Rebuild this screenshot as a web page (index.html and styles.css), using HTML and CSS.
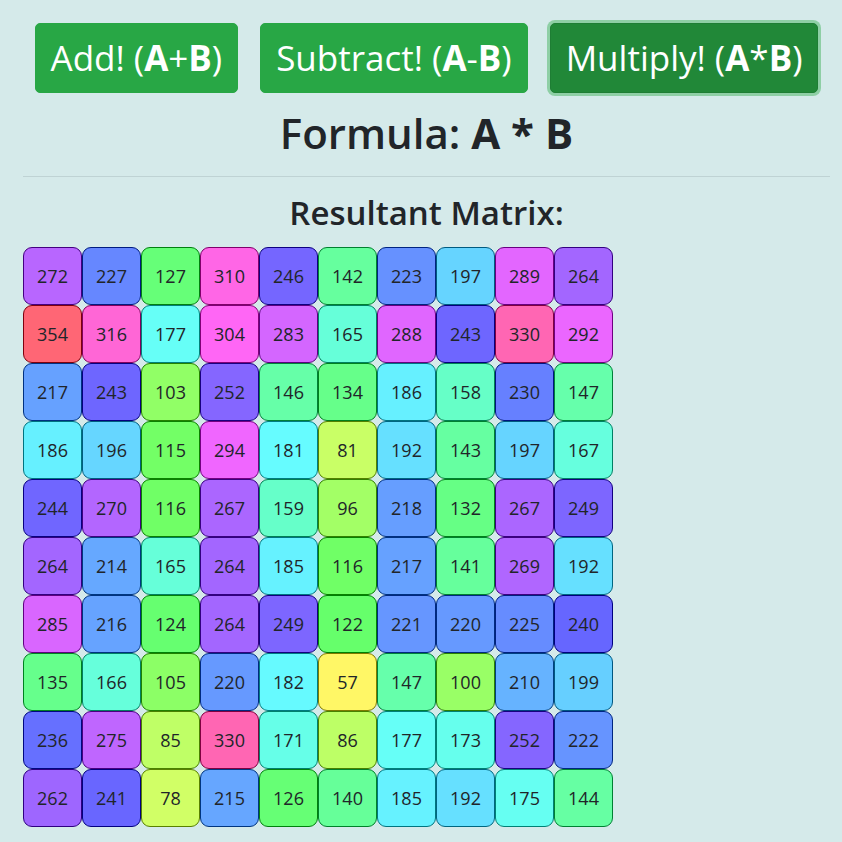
FILE: index.html
```html
<!DOCTYPE html>
<html>
<head>
<meta charset="utf-8">
<link rel="stylesheet" href="styles.css">
</head>
<body>
<div class="container">
  <div class="actions">
    <button class="btn">Add! (<b>A</b>+<b>B</b>)</button>
    <button class="btn">Subtract! (<b>A</b>-<b>B</b>)</button>
    <button class="btn active">Multiply! (<b>A</b>*<b>B</b>)</button>
  </div>
  <h2 class="formula">Formula: <b>A * B</b></h2>
  <hr class="rule">
  <h3 class="result-title">Resultant Matrix:</h3>
  <div class="matrix">
    <div class="cell" style="--h:272">272</div><div class="cell" style="--h:227">227</div><div class="cell" style="--h:127">127</div><div class="cell" style="--h:310">310</div><div class="cell" style="--h:246">246</div><div class="cell" style="--h:142">142</div><div class="cell" style="--h:223">223</div><div class="cell" style="--h:197">197</div><div class="cell" style="--h:289">289</div><div class="cell" style="--h:264">264</div>
    <div class="cell" style="--h:354">354</div><div class="cell" style="--h:316">316</div><div class="cell" style="--h:177">177</div><div class="cell" style="--h:304">304</div><div class="cell" style="--h:283">283</div><div class="cell" style="--h:165">165</div><div class="cell" style="--h:288">288</div><div class="cell" style="--h:243">243</div><div class="cell" style="--h:330">330</div><div class="cell" style="--h:292">292</div>
    <div class="cell" style="--h:217">217</div><div class="cell" style="--h:243">243</div><div class="cell" style="--h:103">103</div><div class="cell" style="--h:252">252</div><div class="cell" style="--h:146">146</div><div class="cell" style="--h:134">134</div><div class="cell" style="--h:186">186</div><div class="cell" style="--h:158">158</div><div class="cell" style="--h:230">230</div><div class="cell" style="--h:147">147</div>
    <div class="cell" style="--h:186">186</div><div class="cell" style="--h:196">196</div><div class="cell" style="--h:115">115</div><div class="cell" style="--h:294">294</div><div class="cell" style="--h:181">181</div><div class="cell" style="--h:81">81</div><div class="cell" style="--h:192">192</div><div class="cell" style="--h:143">143</div><div class="cell" style="--h:197">197</div><div class="cell" style="--h:167">167</div>
    <div class="cell" style="--h:244">244</div><div class="cell" style="--h:270">270</div><div class="cell" style="--h:116">116</div><div class="cell" style="--h:267">267</div><div class="cell" style="--h:159">159</div><div class="cell" style="--h:96">96</div><div class="cell" style="--h:218">218</div><div class="cell" style="--h:132">132</div><div class="cell" style="--h:267">267</div><div class="cell" style="--h:249">249</div>
    <div class="cell" style="--h:264">264</div><div class="cell" style="--h:214">214</div><div class="cell" style="--h:165">165</div><div class="cell" style="--h:264">264</div><div class="cell" style="--h:185">185</div><div class="cell" style="--h:116">116</div><div class="cell" style="--h:217">217</div><div class="cell" style="--h:141">141</div><div class="cell" style="--h:269">269</div><div class="cell" style="--h:192">192</div>
    <div class="cell" style="--h:285">285</div><div class="cell" style="--h:216">216</div><div class="cell" style="--h:124">124</div><div class="cell" style="--h:264">264</div><div class="cell" style="--h:249">249</div><div class="cell" style="--h:122">122</div><div class="cell" style="--h:221">221</div><div class="cell" style="--h:220">220</div><div class="cell" style="--h:225">225</div><div class="cell" style="--h:240">240</div>
    <div class="cell" style="--h:135">135</div><div class="cell" style="--h:166">166</div><div class="cell" style="--h:105">105</div><div class="cell" style="--h:220">220</div><div class="cell" style="--h:182">182</div><div class="cell" style="--h:57">57</div><div class="cell" style="--h:147">147</div><div class="cell" style="--h:100">100</div><div class="cell" style="--h:210">210</div><div class="cell" style="--h:199">199</div>
    <div class="cell" style="--h:236">236</div><div class="cell" style="--h:275">275</div><div class="cell" style="--h:85">85</div><div class="cell" style="--h:330">330</div><div class="cell" style="--h:171">171</div><div class="cell" style="--h:86">86</div><div class="cell" style="--h:177">177</div><div class="cell" style="--h:173">173</div><div class="cell" style="--h:252">252</div><div class="cell" style="--h:222">222</div>
    <div class="cell" style="--h:262">262</div><div class="cell" style="--h:241">241</div><div class="cell" style="--h:78">78</div><div class="cell" style="--h:215">215</div><div class="cell" style="--h:126">126</div><div class="cell" style="--h:140">140</div><div class="cell" style="--h:185">185</div><div class="cell" style="--h:192">192</div><div class="cell" style="--h:175">175</div><div class="cell" style="--h:144">144</div>
  </div>
</div>
</body>
</html>
```

FILE: styles.css
```css
html, body {
  margin: 0;
  padding: 0;
}
body {
  background: #d5eaea;
  color: #212529;
  font-family: "Open Sans", "Noto Sans", sans-serif;
}
.container {
  margin: 0 12px 0 23px;
  padding-top: 23px;
}
.actions {
  display: flex;
  justify-content: center;
  gap: 22px;
}
.btn {
  font-family: inherit;
  font-size: 35px;
  line-height: 54px;
  padding: 7px 15px;
  border: 1px solid #28a745;
  border-radius: 5px;
  background: #28a745;
  color: #fff;
  cursor: pointer;
}
.btn b {
  font-weight: 700;
}
.btn.active {
  background: #218838;
  border-color: #1e7e34;
  box-shadow: 0 0 0 3px #8ecfa5;
}
.formula {
  margin: 12px 0 0;
  text-align: center;
  font-size: 42px;
  line-height: 56px;
  font-weight: 600;
}
.formula b {
  font-weight: 700;
}
.rule {
  margin: 15px 0 0;
  border: 0;
  border-top: 1px solid #bfd3d4;
}
.result-title {
  margin: 16px 0 14px;
  text-align: center;
  font-size: 33px;
  line-height: 40px;
  font-weight: 600;
}
.matrix {
  display: grid;
  grid-template-columns: repeat(10, 59px);
  grid-auto-rows: 58px;
}
.cell {
  box-sizing: border-box;
  display: flex;
  align-items: center;
  justify-content: center;
  font-size: 18px;
  border: 1px solid hsl(var(--h), 100%, 25%);
  border-radius: 9px;
  background: hsl(var(--h), 100%, 70%);
  color: #212529;
}
```
